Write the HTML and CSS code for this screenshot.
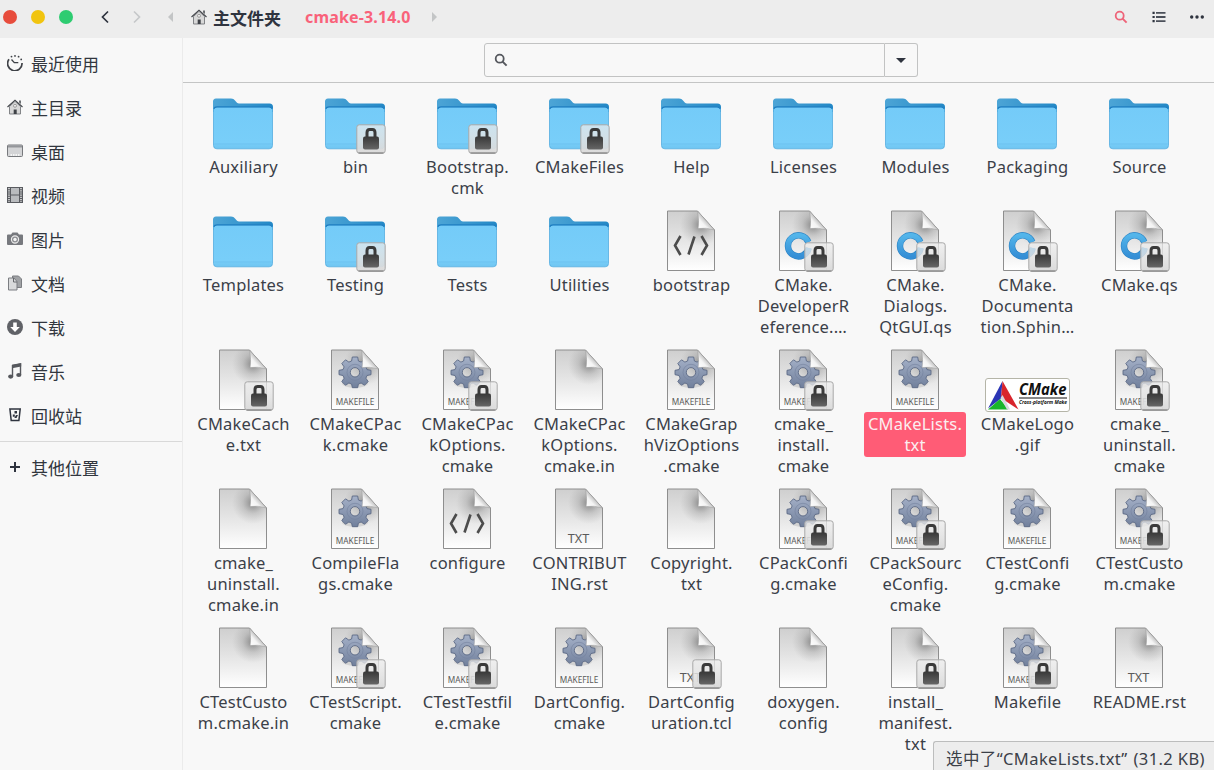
FILE: index.html
```html
<!DOCTYPE html>
<html lang="zh-CN">
<head>
<meta charset="utf-8">
<title>cmake-3.14.0</title>
<link rel="stylesheet" href="styles.css">
</head>
<body>
<svg class="defs" aria-hidden="true">
  <defs>
    <linearGradient id="g-back" x1="0" y1="0" x2="1" y2="0"><stop offset="0" stop-color="#4da5d6"/><stop offset="1" stop-color="#2388c6"/></linearGradient>
    <linearGradient id="g-front" x1="0" y1="0" x2="0" y2="1"><stop offset="0" stop-color="#74cbf8"/><stop offset=".85" stop-color="#78cef9"/><stop offset="1" stop-color="#6fc5f1"/></linearGradient>
    <linearGradient id="g-page" x1="0" y1="0" x2="0" y2="1"><stop offset="0" stop-color="#cfcfcf"/><stop offset=".45" stop-color="#e3e3e3"/><stop offset="1" stop-color="#ffffff"/></linearGradient>
    <radialGradient id="g-shade" gradientUnits="userSpaceOnUse" cx="42" cy="17" r="21"><stop offset="0" stop-color="#666" stop-opacity=".75"/><stop offset=".5" stop-color="#888" stop-opacity=".3"/><stop offset="1" stop-color="#999" stop-opacity="0"/></radialGradient>
    <linearGradient id="g-fold" x1="0" y1="1" x2=".6" y2=".4"><stop offset="0" stop-color="#fff"/><stop offset=".55" stop-color="#f4f4f4"/><stop offset="1" stop-color="#aaa"/></linearGradient>
    <linearGradient id="g-lockbox" x1="0" y1="0" x2="0" y2="1"><stop offset="0" stop-color="#ececec" stop-opacity=".72"/><stop offset="1" stop-color="#d9d9d9" stop-opacity=".97"/></linearGradient>
    <linearGradient id="g-lock" x1="0" y1="0" x2="0" y2="1"><stop offset="0" stop-color="#383838"/><stop offset="1" stop-color="#666"/></linearGradient>
    <linearGradient id="g-gear" x1="0" y1="0" x2="0" y2="1"><stop offset="0" stop-color="#a5b1c8"/><stop offset="1" stop-color="#71809c"/></linearGradient>
    <linearGradient id="g-c" x1="0" y1="0" x2="0" y2="1"><stop offset="0" stop-color="#53b5ea"/><stop offset="1" stop-color="#358fd6"/></linearGradient>
  </defs>
  <symbol id="folder" viewBox="0 0 64 64">
    <path d="M2 18V12a3 3 0 0 1 3-3.500H20c2 0 3 .8 4 2l2 2.200q.8.800 2 .800H58.500a3.500 3.500 0 0 1 3.500 3.500v5H2z" fill="url(#g-back)"/>
    <path d="M2.500 20a3 3 0 0 1 3-3H58.500a3 3 0 0 1 3 3V55.500a3.300 3.300 0 0 1-3.300 3.300H5.800A3.300 3.300 0 0 1 2.500 55.500z" fill="url(#g-front)" stroke="#56ade0" stroke-width=".8"/>
    <path d="M2.800 18.800Q3.500 16.800 6 16.800H58q2.500 0 3.200 2" fill="none" stroke="#1c7cc0" stroke-width="1.200"/>
    <path d="M3.500 54h57" stroke="#6bbfee" stroke-width=".7"/>
  </symbol>
  <symbol id="page" viewBox="0 0 64 64">
    <path d="M8.500 3H38.500L55.500 22V62.500H8.500z" fill="url(#g-page)"/>
    <path d="M8.500 3H38.500L55.500 22V50H8.500z" fill="url(#g-shade)"/>
    <path d="M8.500 3H38.500L55.500 22V62.500H8.500z" fill="none" stroke="#8e8e8e"/>
  </symbol>
  <symbol id="fold" viewBox="0 0 64 64"><path d="M38.700 3.300q1.500 10 .4 17.200 8-1.200 16.400 1.500z" fill="url(#g-fold)" stroke="#999" stroke-width=".5"/></symbol>
  <symbol id="gearshape" viewBox="0 0 64 64">
    <ellipse cx="32" cy="36" rx="13" ry="5" fill="#888" opacity=".25"/>
    <path fill-rule="evenodd" fill="url(#g-gear)" stroke="#5b6984" stroke-width=".9" stroke-linejoin="round" d="M29.300 10h5.400l.7 4 2.700 1.100 3.400-2.300 3.700 3.700-2.300 3.400 1.100 2.700 4 .7v4.400l-4 .8-1.100 2.700 2.300 3.400-3.700 3.700-3.400-2.300-2.700 1.100-.7 3.600h-5.400l-.7-3.600-2.700-1.100-3.400 2.300-3.700-3.700 2.300-3.400-1.100-2.700-4-.8v-4.400l4-.7 1.100-2.700-2.300-3.400 3.700-3.700 3.400 2.300 2.700-1.100zM32 20.600a4.700 4.700 0 1 0 0 9.400 4.700 4.700 0 0 0 0-9.400z"/>
    <circle cx="32" cy="25.300" r="8" fill="none" stroke="#74829e" stroke-width=".6"/>
  </symbol>
  <symbol id="blank" viewBox="0 0 64 64"><use href="#page"/><use href="#fold"/></symbol>
  <symbol id="make" viewBox="0 0 64 64"><use href="#page"/><use href="#gearshape"/><use href="#fold"/></symbol>
  <symbol id="code" viewBox="0 0 64 64"><use href="#page"/><use href="#fold"/><path d="M21.500 28l-5.500 9.500 5.500 9.500M42.500 28l5.500 9.500-5.500 9.500M35.500 28.500L29.500 46.500" fill="none" stroke="#4c4c4c" stroke-width="2.600"/></symbol>
  <symbol id="qs" viewBox="0 0 64 64"><use href="#page"/><use href="#fold"/><path d="M37.800 40A10.500 10.500 0 1 1 37.300 34" fill="none" stroke="#2c83c4" stroke-width="6.400"/><path d="M37.800 40A10.500 10.500 0 1 1 37.300 34" fill="none" stroke="url(#g-c)" stroke-width="5.200"/></symbol>
  <symbol id="lock" viewBox="-33 -34 64 64">
    <rect x=".8" y=".8" width="28.400" height="28.400" rx="2.500" fill="url(#g-lockbox)" stroke="#a8a8a8"/>
    <path d="M2.500 29h25" stroke="#777" stroke-width="1"/>
    <path d="M11 14V8.700Q11 5.500 13.500 5.500h3Q19 5.500 19 8.700V14" fill="none" stroke="#3a3a3a" stroke-width="3"/>
    <rect x="7" y="12.500" width="16" height="13" rx="2" fill="url(#g-lock)"/>
  </symbol>
  <symbol id="home" viewBox="0 0 16 16"><path d="M2.500 7.500L8 2.300l5.500 5.200V15h-11z" fill="#d8d8d8" stroke="#77797d" stroke-width=".9"/><path d="M.5 8L8 1.200 15.500 8" fill="none" stroke="#3f4247" stroke-width="1.100"/><path d="M12.200 1.500h1.600v3.600l-1.600-1.500z" fill="#4a4d52"/><circle cx="8" cy="6.800" r="1.500" fill="#eee" stroke="#8a8a8a" stroke-width=".8"/><path d="M6.700 10.500h3V15h-3z" fill="#3f4247"/></symbol>
  <symbol id="search" viewBox="0 0 14 14"><circle cx="5.700" cy="5.700" r="4" fill="none" stroke="currentColor" stroke-width="1.800"/><path d="M8.600 8.600l4 4" stroke="currentColor" stroke-width="2"/></symbol>
</svg>

<header class="topbar">
  <div class="window-buttons"><i class="dot red"></i><i class="dot yellow"></i><i class="dot green"></i></div>
  <svg class="nav" viewBox="0 0 8 14"><path d="M7 1.500L1.500 7 7 12.500" fill="none" stroke="#2f343f" stroke-width="1.700"/></svg>
  <svg class="nav forward" viewBox="0 0 8 14"><path d="M1 1.500L6.500 7 1 12.500" fill="none" stroke="#c6c8ca" stroke-width="1.700"/></svg>
  <svg class="tri left" viewBox="0 0 5 10"><path d="M5 0v10L0 5z"/></svg>
  <svg class="home" viewBox="0 0 16 16"><use href="#home"/></svg>
  <span class="crumb">主文件夹</span>
  <span class="crumb current">cmake-3.14.0</span>
  <svg class="tri" viewBox="0 0 5 10"><path d="M0 0v10l5-5z"/></svg>
  <div class="tools">
    <svg class="tool accent" viewBox="0 0 14 14"><use href="#search"/></svg>
    <svg class="tool" viewBox="0 0 14 14"><path d="M.5 2.800h2.200M.5 7h2.200M.5 11.200h2.200" stroke="#2f343f" stroke-width="2.200"/><path d="M4 2.800h9.500M4 7h9.500M4 11.200h9.500" stroke="#4b505a" stroke-width="1.800"/></svg>
    <svg class="tool" viewBox="0 0 14 14"><g fill="#2f343f"><circle cx="1.700" cy="7" r="1.700"/><circle cx="7" cy="7" r="1.700"/><circle cx="12.300" cy="7" r="1.700"/></g></svg>
  </div>
</header>

<div class="body">
  <nav class="sidebar">
    <a class="place"><svg viewBox="0 0 16 16"><path d="M2 4.300A7.200 7.200 0 1 0 15 8" fill="none" stroke="#3f4247" stroke-width="1.700"/><path d="M4.500 4.500L7.300 7.700h4" fill="none" stroke="#3f4247" stroke-width="1.300"/><g fill="#3f4247"><circle cx="4.500" cy="1.600" r=".9"/><circle cx="8" cy=".9" r=".9"/><circle cx="11.600" cy="1.700" r=".9"/><circle cx="14.200" cy="4.400" r=".9"/></g></svg>最近使用</a>
    <a class="place"><svg viewBox="0 0 16 16"><use href="#home"/></svg>主目录</a>
    <a class="place"><svg viewBox="0 0 16 16"><rect x=".5" y="2" width="15" height="11.500" rx="1" fill="#d3d4d6" stroke="#77797d"/><path d="M1 3.500h14" stroke="#94969a" stroke-width="2"/><path d="M3.500 12h9" stroke="#fff" stroke-width="1.500" stroke-dasharray="1.500 1"/></svg>桌面</a>
    <a class="place"><svg viewBox="0 0 16 16"><path d="M0 0h16v16H0z" fill="#595b60"/><path d="M4 1h8v6.500H4zM4 8.500h8V15H4z" fill="#b9bbbe"/><path d="M2 1v14M14 1v14" stroke="#d8d9da" stroke-width="1.700" stroke-dasharray="1.200 1"/></svg>视频</a>
    <a class="place"><svg viewBox="0 0 16 16"><path d="M1 3.500h3L5.500 1.500h5L12 3.500h3q1 0 1 1v8.500q0 1-1 1H1q-1 0-1-1V4.500q0-1 1-1z" fill="#77797e"/><circle cx="8" cy="8.500" r="3.600" fill="#8c8e92" stroke="#eee" stroke-width="1.100"/><circle cx="8" cy="8.500" r="1.700" fill="#f5f5f5"/></svg>图片</a>
    <a class="place"><svg viewBox="0 0 16 16"><path d="M5.500 1h6l3 3v8.500h-9z" fill="#a0a2a5" stroke="#7b7d81"/><path d="M1.500 3H7l3 3.500v8.500H1.500z" fill="#d9dadb" stroke="#7b7d81"/><path d="M6.500 3v4H10" fill="none" stroke="#66686c"/></svg>文档</a>
    <a class="place"><svg viewBox="0 0 16 16"><circle cx="8" cy="8" r="8" fill="#606267"/><path d="M6.200 3.500h3.600V8h3L8 13 3.200 8h3z" fill="#fff"/></svg>下载</a>
    <a class="place"><svg viewBox="0 0 16 16"><path d="M5.500 13V2.600L13.500 1v11" fill="none" stroke="#56585d" stroke-width="1.400"/><path d="M5 1.800L14.200 0v3.500L5 5.200z" fill="#56585d"/><ellipse cx="3.700" cy="13.600" rx="2.600" ry="2.100" fill="#56585d"/><ellipse cx="11.800" cy="12" rx="2.600" ry="2.100" fill="#56585d"/></svg>音乐</a>
    <a class="place"><svg viewBox="0 0 16 16"><path d="M2.900 2h10.300l-1.300 11.500H4.200z" fill="none" stroke="#2f343f" stroke-width="1.500"/><path d="M7.500 4h2.500v2.500H7.500zM5.800 7.500h2v2.300h-2zM9 8h2L9.500 11H7.300z" fill="#2f343f"/></svg>回收站</a>
    <a class="place other"><svg viewBox="0 0 16 16"><path d="M8 3v10M3 8h10" stroke="#2f343f" stroke-width="2"/></svg>其他位置</a>
  </nav>

  <main class="content">
    <div class="searchbar">
      <div class="field"><svg viewBox="0 0 14 14"><use href="#search"/></svg></div>
      <div class="drop"></div>
    </div>
    <section class="files">
      <div class="file"><svg class="icon"><use href="#folder"/></svg><span>Auxiliary</span></div>
      <div class="file"><svg class="icon"><use href="#folder"/><use href="#lock"/></svg><span>bin</span></div>
      <div class="file"><svg class="icon"><use href="#folder"/><use href="#lock"/></svg><span>Bootstrap.<br>cmk</span></div>
      <div class="file"><svg class="icon"><use href="#folder"/><use href="#lock"/></svg><span>CMakeFiles</span></div>
      <div class="file"><svg class="icon"><use href="#folder"/></svg><span>Help</span></div>
      <div class="file"><svg class="icon"><use href="#folder"/></svg><span>Licenses</span></div>
      <div class="file"><svg class="icon"><use href="#folder"/></svg><span>Modules</span></div>
      <div class="file"><svg class="icon"><use href="#folder"/></svg><span>Packaging</span></div>
      <div class="file"><svg class="icon"><use href="#folder"/></svg><span>Source</span></div>

      <div class="file"><svg class="icon"><use href="#folder"/></svg><span>Templates</span></div>
      <div class="file"><svg class="icon"><use href="#folder"/><use href="#lock"/></svg><span>Testing</span></div>
      <div class="file"><svg class="icon"><use href="#folder"/></svg><span>Tests</span></div>
      <div class="file"><svg class="icon"><use href="#folder"/></svg><span>Utilities</span></div>
      <div class="file"><svg class="icon"><use href="#code"/></svg><span>bootstrap</span></div>
      <div class="file"><svg class="icon"><use href="#qs"/><use href="#lock"/></svg><span>CMake.<br>DeveloperR<br>eference.…</span></div>
      <div class="file"><svg class="icon"><use href="#qs"/><use href="#lock"/></svg><span>CMake.<br>Dialogs.<br>QtGUI.qs</span></div>
      <div class="file"><svg class="icon"><use href="#qs"/><use href="#lock"/></svg><span>CMake.<br>Documenta<br>tion.Sphin…</span></div>
      <div class="file"><svg class="icon"><use href="#qs"/><use href="#lock"/></svg><span>CMake.qs</span></div>

      <div class="file"><svg class="icon"><use href="#blank"/><use href="#lock"/></svg><span>CMakeCach<br>e.txt</span></div>
      <div class="file"><svg class="icon"><use href="#make"/><text class="tag">MAKEFILE</text></svg><span>CMakeCPac<br>k.cmake</span></div>
      <div class="file"><svg class="icon"><use href="#make"/><text class="tag">MAKEFILE</text><use href="#lock"/></svg><span>CMakeCPac<br>kOptions.<br>cmake</span></div>
      <div class="file"><svg class="icon"><use href="#blank"/></svg><span>CMakeCPac<br>kOptions.<br>cmake.in</span></div>
      <div class="file"><svg class="icon"><use href="#make"/><text class="tag">MAKEFILE</text></svg><span>CMakeGrap<br>hVizOptions<br>.cmake</span></div>
      <div class="file"><svg class="icon"><use href="#make"/><text class="tag">MAKEFILE</text><use href="#lock"/></svg><span>cmake_<br>install.<br>cmake</span></div>
      <div class="file selected"><svg class="icon"><use href="#make"/><text class="tag">MAKEFILE</text></svg><span>CMakeLists.<br>txt</span></div>
      <div class="file"><div class="icon thumb"><svg viewBox="1 1 83 32"><path d="M17.500 3L3 30.500l13-10z" fill="#2b35b5"/><path d="M17.500 3L16 20 33.500 31.500z" fill="#d8242c"/><path d="M3 31.500L15 21l7 8.500 1 2z" fill="#18b52a"/><path d="M15.500 20l2-3 4 7.500 3.500 7h-3z" fill="#d6d8dd"/><text x="34" y="17.300" class="logo-name" textLength="47.500" lengthAdjust="spacingAndGlyphs">CMake</text><path d="M34 20h48" stroke="#111"/><text x="34" y="26.200" class="logo-sub" textLength="48" lengthAdjust="spacingAndGlyphs">Cross-platform Make</text></svg></div><span>CMakeLogo<br>.gif</span></div>
      <div class="file"><svg class="icon"><use href="#make"/><text class="tag">MAKEFILE</text><use href="#lock"/></svg><span>cmake_<br>uninstall.<br>cmake</span></div>

      <div class="file"><svg class="icon"><use href="#blank"/></svg><span>cmake_<br>uninstall.<br>cmake.in</span></div>
      <div class="file"><svg class="icon"><use href="#make"/><text class="tag">MAKEFILE</text></svg><span>CompileFla<br>gs.cmake</span></div>
      <div class="file"><svg class="icon"><use href="#code"/></svg><span>configure</span></div>
      <div class="file"><svg class="icon"><use href="#blank"/><text class="tag tag-big">TXT</text></svg><span>CONTRIBUT<br>ING.rst</span></div>
      <div class="file"><svg class="icon"><use href="#blank"/></svg><span>Copyright.<br>txt</span></div>
      <div class="file"><svg class="icon"><use href="#make"/><text class="tag">MAKEFILE</text><use href="#lock"/></svg><span>CPackConfi<br>g.cmake</span></div>
      <div class="file"><svg class="icon"><use href="#make"/><text class="tag">MAKEFILE</text><use href="#lock"/></svg><span>CPackSourc<br>eConfig.<br>cmake</span></div>
      <div class="file"><svg class="icon"><use href="#make"/><text class="tag">MAKEFILE</text></svg><span>CTestConfi<br>g.cmake</span></div>
      <div class="file"><svg class="icon"><use href="#make"/><text class="tag">MAKEFILE</text><use href="#lock"/></svg><span>CTestCusto<br>m.cmake</span></div>

      <div class="file"><svg class="icon"><use href="#blank"/></svg><span>CTestCusto<br>m.cmake.in</span></div>
      <div class="file"><svg class="icon"><use href="#make"/><text class="tag">MAKEFILE</text><use href="#lock"/></svg><span>CTestScript.<br>cmake</span></div>
      <div class="file"><svg class="icon"><use href="#make"/><text class="tag">MAKEFILE</text><use href="#lock"/></svg><span>CTestTestfil<br>e.cmake</span></div>
      <div class="file"><svg class="icon"><use href="#make"/><text class="tag">MAKEFILE</text></svg><span>DartConfig.<br>cmake</span></div>
      <div class="file"><svg class="icon"><use href="#blank"/><text class="tag tag-big">TXT</text><use href="#lock"/></svg><span>DartConfig<br>uration.tcl</span></div>
      <div class="file"><svg class="icon"><use href="#blank"/></svg><span>doxygen.<br>config</span></div>
      <div class="file"><svg class="icon"><use href="#blank"/><use href="#lock"/></svg><span>install_<br>manifest.<br>txt</span></div>
      <div class="file"><svg class="icon"><use href="#make"/><text class="tag">MAKEFILE</text><use href="#lock"/></svg><span>Makefile</span></div>
      <div class="file"><svg class="icon"><use href="#blank"/><text class="tag tag-big">TXT</text></svg><span>README.rst</span></div>
    </section>
  </main>
</div>
<div class="status"><span>选中了“</span><span>CMakeLists.txt</span><span>”</span><span class="status-size">(31.2 KB)</span></div>
</body>
</html>
```
FILE: styles.css
```css
* { box-sizing: border-box; }
body {
  margin: 0;
  width: 1214px;
  height: 770px;
  overflow: hidden;
  position: relative;
  display: flex;
  flex-direction: column;
  background: #f8f8f8;
  color: #3b4048;
  font-family: "Noto Sans", "Noto Sans CJK SC", sans-serif;
  font-size: 16.5px;
}
svg { display: block; flex: none; }
.defs { position: absolute; width: 0; height: 0; }

.topbar {
  height: 38px;
  flex: none;
  display: flex;
  align-items: center;
  padding: 0 10px 4px 3px;
  background: #ededed;
}
.window-buttons { display: flex; gap: 14px; }
.dot { width: 14px; height: 14px; border-radius: 50%; }
.red { background: #e74c3c; }
.yellow { background: #f1c40f; }
.green { background: #2ecc71; }
.nav { width: 8px; height: 14px; margin-left: 28px; }
.forward { margin-left: 24px; }
.tri { width: 5px; height: 10px; fill: #c3c5c6; margin-left: 22px; }
.tri.left { margin-left: 27px; }
.home { width: 16px; height: 16px; margin-left: 18px; }
.crumb {
  font: bold 17px/20px "Noto Sans CJK SC", sans-serif;
  color: #2f343f;
  margin: 2px 0 0 6px;
}
.current {
  font: bold 16px/20px "Noto Sans", sans-serif;
  letter-spacing: .15px;
  color: #f9627a;
  margin: 0 0 0 24px;
}
.tools { margin-left: auto; display: flex; gap: 24px; color: #2f343f; }
.tool { width: 14px; height: 14px; }
.accent { color: #ee6479; }

.body { flex: 1; display: flex; min-height: 0; }
.sidebar {
  width: 183px;
  flex: none;
  border-right: 1px solid #ebebeb;
  padding-top: 4px;
}
.place {
  height: 44px;
  display: flex;
  align-items: center;
  gap: 8px;
  padding-left: 7px;
  font: 17px/24px "Noto Sans CJK SC", sans-serif;
  color: #31363e;
}
.place svg { width: 16px; height: 16px; margin-bottom: 2px; }
.other { border-top: 1px solid #d9d9d9; margin-top: 3px; height: 53px; }

.content { flex: 1; min-width: 0; }
.searchbar {
  height: 45px;
  border-bottom: 1px solid #c4c5c5;
  display: flex;
  padding: 5px 0 5px 301px;
}
.field {
  width: 401px;
  height: 34px;
  border: 1px solid #c2c3c3;
  border-radius: 3px 0 0 3px;
  display: flex;
  align-items: center;
  padding-left: 9px;
  color: #55585e;
}
.field svg { width: 14px; height: 14px; }
.drop {
  width: 33px;
  height: 34px;
  border: 1px solid #c2c3c3;
  border-left: 0;
  border-radius: 0 3px 3px 0;
  display: grid;
  place-items: center;
}
.drop::after {
  content: "";
  border: 5px solid transparent;
  border-top-color: #2f343f;
  border-bottom: 0;
}

.files {
  display: grid;
  grid-template-columns: repeat(9, 112px);
  row-gap: 8px;
  padding: 7px 0 0 4px;
}
.file { display: flex; flex-direction: column; align-items: center; }
.icon { width: 64px; height: 64px; margin-bottom: 1px; }
.file > span {
  padding: 1px 4px 2px 5px;
  line-height: 21px;
  text-align: center;
  white-space: nowrap;
  letter-spacing: .2px;
}
.selected > span { width: 102px; padding-inline: 0; background: #ff5c76; color: #fbeef0; border-radius: 3px; }
.tag {
  font: 9.2px "Noto Sans", sans-serif;
  fill: #5a5a5a;
  text-anchor: middle;
  transform: translate(32px, 58px) scaleX(.9);
}
.tag-big { font-size: 13.5px; transform: translate(31.5px, 57px) scaleX(.94); }
.thumb { width: auto; height: 65px; margin: 0; display: flex; align-items: flex-end; }
.thumb svg {
  width: 85px;
  height: 34px;
  background: #fff;
  border: 1px solid #b5b5a8;
  border-radius: 3px;
}
.logo-name { font: italic bold 15.500px "Open Sans", sans-serif; fill: #111; }
.logo-sub { font: italic bold 6px "Open Sans", sans-serif; fill: #111; }

.status {
  position: absolute;
  right: 0;
  bottom: 0;
  width: 281px;
  height: 29px;
  display: flex;
  padding: 5px 0 0 12px;
  background: #ededed;
  border: solid #bcbdbd;
  border-width: 1px 0 0 1px;
  border-radius: 3px 0 0 0;
  line-height: 23px;
  white-space: nowrap;
  letter-spacing: .4px;
}
.status-size { margin-left: 6px; }
```
